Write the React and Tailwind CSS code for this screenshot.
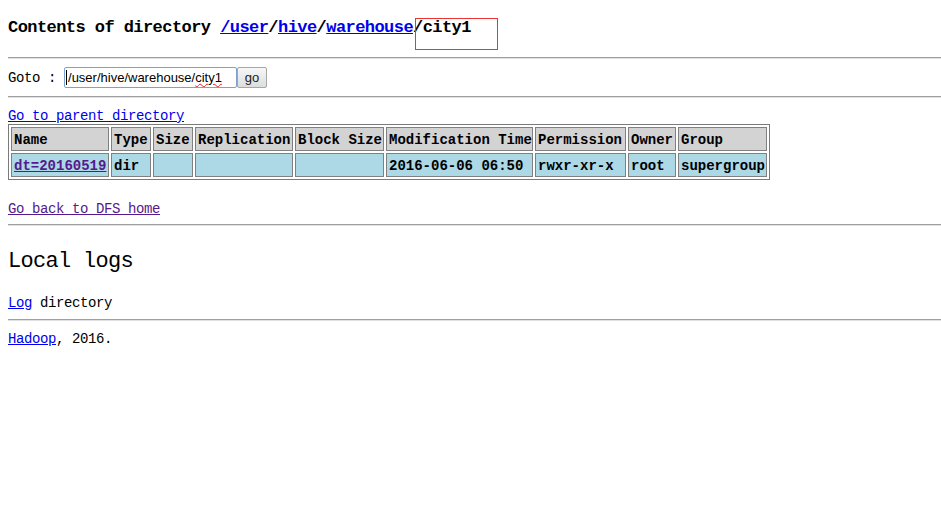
const COLS = [
  { name: "Name", w: "w-[98px]" },
  { name: "Type", w: "w-[40px]" },
  { name: "Size", w: "w-[40px]" },
  { name: "Replication", w: "w-[98px]" },
  { name: "Block Size", w: "w-[89px]" },
  { name: "Modification Time", w: "w-[147px]" },
  { name: "Permission", w: "w-[91px]" },
  { name: "Owner", w: "w-[48px]" },
  { name: "Group", w: "w-[89px]" },
];

const ROW = [
  <a href="#" className="text-[#551a8b] underline">dt=20160519</a>,
  "dir",
  "",
  "",
  "",
  "2016-06-06 06:50",
  "rwxr-xr-x",
  "root",
  "supergroup",
];

function Hr({ className = "" }) {
  return <div className={`ml-2 h-[2px] border-t border-t-[#a0a0a0] border-b border-b-[#e0e0e0] ${className}`} />;
}

function Cell({ w, bg, children }) {
  return (
    <div className={`${w} h-[24px] ${bg} border border-[#808080] pl-[2px] pt-px flex items-center whitespace-nowrap overflow-hidden`}>
      {children}
    </div>
  );
}

export default function App() {
  return (
    <div className="relative w-[941px] h-[525px] bg-white text-black font-['Liberation_Mono',monospace] text-[14px] tracking-[-0.4px] leading-[16px]">
      {/* heading */}
      <div className="h-[57px] pl-2 pt-[18px] text-[17px] tracking-[-0.56px] font-bold leading-[20px] whitespace-nowrap">
        Contents of directory{" "}
        <a href="#" className="text-[#0000ee] underline">/user</a>/
        <a href="#" className="text-[#0000ee] underline">hive</a>/
        <a href="#" className="text-[#0000ee] underline">warehouse</a>/city1
      </div>
      <div className="absolute left-[415px] top-[18px] w-[83px] h-[32px] border border-[#ee3333]" />

      <Hr />

      {/* goto */}
      <div className="h-[37px] pt-[8px] pl-2 flex items-start">
        <span className="h-[21px] flex items-center whitespace-pre">Goto : </span>
        <div className="w-[173px] h-[21px] border border-[#7da2ce] rounded-[2px] flex items-center pl-[1px] font-['Liberation_Sans',sans-serif] text-[13px] tracking-normal text-black whitespace-nowrap">
          <span className="w-px h-[15px] bg-black mr-px" />
          /user/hive/warehouse/
          <span className="underline decoration-wavy decoration-[#e02020] decoration-1">city1</span>
        </div>
        <button className="w-[30px] h-[21px] border border-[#a6a6a6] rounded-[2px] bg-gradient-to-b from-[#f7f7f7] to-[#dddddd] font-['Liberation_Sans',sans-serif] text-[13px] tracking-normal text-[#222] leading-none">
          go
        </button>
      </div>

      <Hr />

      {/* listing */}
      <div className="pl-2">
        <div className="mt-[11px] leading-[15px]">
          <a href="#" className="text-[#0000ee] underline">Go to parent directory</a>
        </div>
        <div className="inline-flex flex-col gap-[2px] p-[2px] border border-[#7a7a7a] font-bold text-[14px] tracking-normal">
          <div className="flex gap-[2px]">
            {COLS.map((c) => (
              <Cell key={c.name} w={c.w} bg="bg-[#d3d3d3]">{c.name}</Cell>
            ))}
          </div>
          <div className="flex gap-[2px]">
            {COLS.map((c, i) => (
              <Cell key={c.name} w={c.w} bg="bg-[#add8e6]">{ROW[i]}</Cell>
            ))}
          </div>
        </div>
        <div className="mt-[21px] mb-[7px]">
          <a href="#" className="text-[#551a8b] underline">Go back to DFS home</a>
        </div>
      </div>

      <Hr />

      <div className="pl-2 mt-[23px] text-[22px] tracking-[-0.7px] leading-[26px]">Local logs</div>
      <div className="pl-2 mt-[20px] mb-[8px]">
        <a href="#" className="text-[#0000ee] underline">Log</a> directory
      </div>

      <Hr />

      <div className="pl-2 mt-[10px]">
        <a href="#" className="text-[#0000ee] underline">Hadoop</a>, 2016.
      </div>
    </div>
  );
}
